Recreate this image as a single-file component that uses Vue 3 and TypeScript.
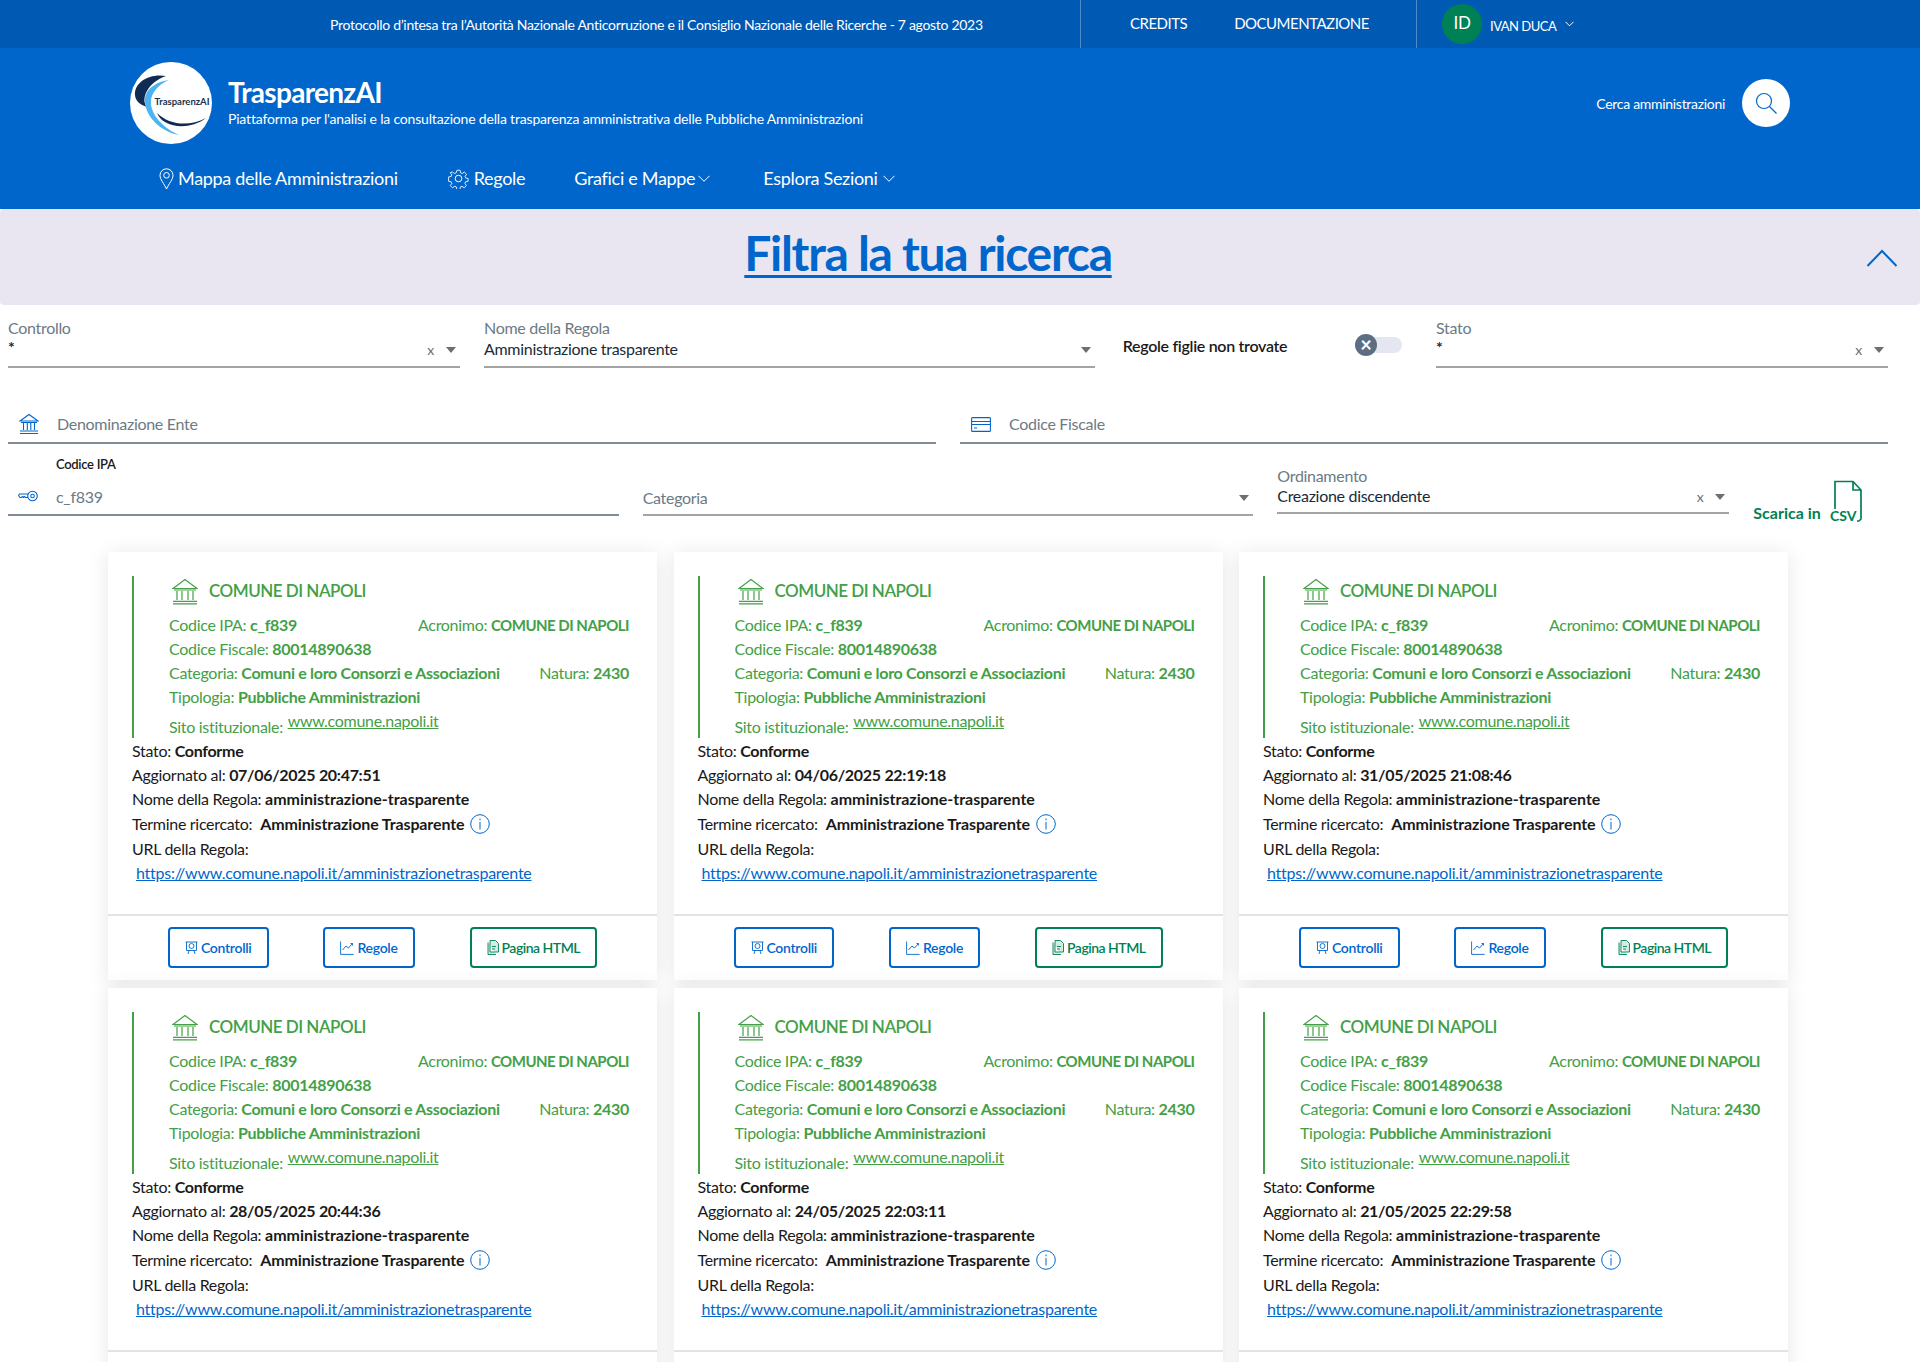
<script setup lang="ts">
const cards = [
  { updated: '07/06/2025 20:47:51' },
  { updated: '04/06/2025 22:19:18' },
  { updated: '31/05/2025 21:08:46' },
  { updated: '28/05/2025 20:44:36' },
  { updated: '24/05/2025 22:03:11' },
  { updated: '21/05/2025 22:29:58' },
];
</script>

<template>
  <div class="page">
    <div class="topbar">
      <span class="topbar-text">Protocollo d’intesa tra l’Autorità Nazionale Anticorruzione e il Consiglio Nazionale delle Ricerche - 7 agosto 2023</span>
      <div class="topbar-links">
        <a>CREDITS</a>
        <a>DOCUMENTAZIONE</a>
      </div>
      <div class="topbar-user">
        <span class="avatar">ID</span>
        <span class="user-name">IVAN DUCA</span>
        <svg class="user-chevron" width="9" height="6" viewBox="0 0 9 6"><path d="M.5.8l4 4 4-4" fill="none" stroke="#fff" /></svg>
      </div>
    </div>

    <header class="header">
      <div class="brand-row">
        <svg class="logo" width="82" height="82" viewBox="0 0 82 82">
          <circle cx="41" cy="41" r="41" fill="#fff" />
          <path d="M36 14C20 11 4 20 5 33c0 5 5 10 12 12C10 37 18 20 36 14z" fill="#0f2b52" />
          <path d="M39 18C25 20 14 28 15 40c1 16 17 30 34 33C33 66 20 52 21 39c0-8 8-17 18-21z" fill="#4db4f2" />
          <path d="M27 51c6 15 32 18 49 5-17 9-37 7-49-5z" fill="#0f2b52" />
          <text x="52" y="43" text-anchor="middle" class="logo-text">TrasparenzAI</text>
        </svg>
        <div class="brand-text">
          <div class="brand-title">TrasparenzAI</div>
          <div class="brand-sub">Piattaforma per l'analisi e la consultazione della trasparenza amministrativa delle Pubbliche Amministrazioni</div>
        </div>
        <div class="search">
          <span>Cerca amministrazioni</span>
          <span class="search-btn">
            <svg width="24" height="24" viewBox="0 0 24 24" fill="none" stroke="#0066cc" stroke-width="1.2"><circle cx="10" cy="10" r="7.5" /><path d="M15.5 15.5l7 7" /></svg>
          </span>
        </div>
      </div>
      <nav class="nav">
        <a class="nav-item nav-mappa">
          <svg width="15" height="22" viewBox="0 0 15 22" fill="none" stroke="#fff"><path d="M7.5 21C5 15.500 1 11.500 1 7.300A6.500 6.500 0 0 1 14 7.300C14 11.500 10 15.500 7.500 21z" /><circle cx="7.500" cy="7.300" r="2.800" /></svg>
          Mappa delle Amministrazioni
        </a>
        <a class="nav-item nav-regole">
          <svg width="21" height="21" viewBox="0 0 24 24" fill="none" stroke="#fff" stroke-width="1.100"><circle cx="12" cy="12" r="3.800" /><path d="M10 1.500h4l.6 3.300 2 .9 2.800-1.900 2.800 2.800-1.900 2.800.9 2v0l3 .6v3.500l-3.300.7-.8 2 1.900 2.800-2.800 2.800-2.800-1.900-2 .8-.6 3.300h-4l-.6-3.300-2-.8-2.800 1.900-2.800-2.800 1.900-2.800-.8-2-3.300-.7V10l3.300-.6.800-2L1.500 4.600 4.300 3.800l2.800 1.900 2-.9z" transform="translate(1.200 1.200) scale(.9)" /></svg>
          Regole
        </a>
        <a class="nav-item nav-grafici">
          Grafici e Mappe
          <svg width="12" height="7" viewBox="0 0 12 7"><path d="M.5.800l5.500 5.500L11.500.800" fill="none" stroke="#fff" /></svg>
        </a>
        <a class="nav-item nav-esplora">
          Esplora Sezioni
          <svg width="12" height="7" viewBox="0 0 12 7"><path d="M.5.800l5.500 5.500L11.500.800" fill="none" stroke="#fff" /></svg>
        </a>
      </nav>
    </header>

    <div class="filter-band">
      <h1 class="filter-title"><a>Filtra la tua ricerca</a></h1>
      <svg class="filter-chevron" width="32" height="18" viewBox="0 0 32 18"><path d="M1.500 17L16 2l14.500 15" fill="none" stroke="#0066cc" stroke-width="2" /></svg>
    </div>

    <section class="filters">
      <div class="select span-3 row-one">
        <label>Controllo</label>
        <div class="select-value star">*</div>
        <span class="clear">x</span><span class="arrow"></span>
      </div>
      <div class="select span-4 row-one">
        <label>Nome della Regola</label>
        <div class="select-value">Amministrazione trasparente</div>
        <span class="arrow"></span>
      </div>
      <div class="toggle-field span-2">
        <span>Regole figlie non trovate</span>
        <span class="toggle">
          <span class="toggle-knob">×</span>
        </span>
      </div>
      <div class="select span-3 row-one">
        <label>Stato</label>
        <div class="select-value star">*</div>
        <span class="clear">x</span><span class="arrow"></span>
      </div>

      <div class="input span-6 row-two">
        <svg width="20" height="22" viewBox="0 0 20 22" fill="none" stroke="#0066cc" stroke-width="1.100"><path d="M1 8l9-6.500L19 8zM2 9.500h16M4.500 10v7M8.300 10v7M11.800 10v7M15.500 10v7M1 18h18M1 20.500h18" /></svg>
        <span>Denominazione Ente</span>
      </div>
      <div class="input span-6 row-two">
        <svg width="20" height="15" viewBox="0 0 20 15" fill="none" stroke="#0066cc" stroke-width="1.100"><rect x=".6" y=".6" width="18.800" height="13.800" rx="1" /><path d="M.6 4.500h18.800M.6 7.500h18.800M3 11h3" /></svg>
        <span>Codice Fiscale</span>
      </div>

      <div class="input span-4 row-three">
        <label class="ipa-label">Codice IPA</label>
        <svg class="key-icon" width="20" height="12" viewBox="0 0 20 12" fill="none" stroke="#0066cc" stroke-width="1.100"><circle cx="14.500" cy="6" r="4.800" /><circle cx="14.500" cy="6" r="1.800" /><path d="M10 4H1.500L.6 5.500 2 7.500h1.500l1-1 1 1 1-1 1 1H10" /></svg>
        <span class="ipa-value">c_f839</span>
      </div>
      <div class="select span-4 row-three categoria">
        <div class="select-placeholder">Categoria</div>
        <span class="arrow"></span>
      </div>
      <div class="select span-3 row-three ordinamento">
        <label>Ordinamento</label>
        <div class="select-value">Creazione discendente</div>
        <span class="clear">x</span><span class="arrow"></span>
      </div>
      <a class="csv span-1">
        <span class="csv-label">Scarica in</span>
        <svg width="33" height="43" viewBox="0 0 33 43" fill="none" stroke="#008055" stroke-width="1.700">
          <path d="M5 29V1.500h18L31 10v29l-2 2h-2M23 1.500V10h8" />
          <text x="0" y="41" class="csv-text">CSV</text>
        </svg>
      </a>
    </section>

    <section class="cards">
      <article v-for="card in cards" :key="card.updated" class="card">
        <div class="card-body">
          <div class="entity">
            <div class="entity-name">
              <svg width="26" height="27" viewBox="0 0 26 27" fill="none" stroke="#43a047" stroke-width="1.200"><path d="M1 10.500L13 1.500l12 9zM2 12h22M5 13v9M10 13v9M16 13v9M21 13v9M1 23.300h24M1 25.800h24" /></svg>
              COMUNE DI NAPOLI
            </div>
            <div class="entity-row">
              <span>Codice IPA: <b>c_f839</b></span>
              <span>Acronimo: <b class="caps">COMUNE DI NAPOLI</b></span>
            </div>
            <div class="entity-row">
              <span>Codice Fiscale: <b>80014890638</b></span>
            </div>
            <div class="entity-row">
              <span>Categoria: <b>Comuni e loro Consorzi e Associazioni</b></span>
              <span>Natura: <b>2430</b></span>
            </div>
            <div class="entity-row">
              <span>Tipologia: <b>Pubbliche Amministrazioni</b></span>
            </div>
            <div class="entity-site">
              Sito istituzionale: <a>www.comune.napoli.it</a>
            </div>
          </div>
          <div class="detail">Stato: <b>Conforme</b></div>
          <div class="detail">Aggiornato al: <b>{{ card.updated }}</b></div>
          <div class="detail">Nome della Regola: <b class="rule-name">amministrazione-trasparente</b></div>
          <div class="detail term">
            Termine ricercato: <b>Amministrazione Trasparente</b>
            <svg width="20" height="20" viewBox="0 0 20 20" fill="none" stroke="#0066cc"><circle cx="10" cy="10" r="9.300" /><path d="M10 8v7.500M10 4.500v1.800" /></svg>
          </div>
          <div class="detail url-label">URL della Regola:</div>
          <a class="rule-url">https://www.comune.napoli.it/amministrazionetrasparente</a>
        </div>
        <div class="card-actions">
          <a class="btn">
            <svg width="13" height="14" viewBox="0 0 13 14" fill="none" stroke="#0066cc" stroke-width=".9"><path d="M.5 1h12M1.500 1v8.500h10V1M4 9.500L3 13M9 9.500l1 3.500" /><circle cx="6.500" cy="5" r="2.500" /></svg>
            Controlli
          </a>
          <a class="btn">
            <svg width="14" height="14" viewBox="0 0 14 14" fill="none" stroke="#0066cc" stroke-width=".9"><path d="M.6.500v12.900h13M2.500 9l3.500-4 2.500 2 4-4.500M10.500 2.500h2v2" /></svg>
            Regole
          </a>
          <a class="btn btn-green">
            <svg width="12" height="15" viewBox="0 0 12 15" fill="none" stroke="#008055" stroke-width=".9"><path d="M3 .5h5.500l3 3V12H3zM1 2.500v12h8" fill="#d5ebe2" /><path d="M5 6.500h4M5 9h3" /></svg>
            Pagina HTML
          </a>
        </div>
      </article>
    </section>
  </div>
</template>

<style scoped>
.page {
  height: 1362px;
  overflow: hidden;
  background: #fff;
  font-family: Lato, "Open Sans", sans-serif;
  letter-spacing: -0.3px;
  color: #1a1a1a;
}

.topbar {
  height: 48px;
  background: #0059b3;
  color: #fff;
  display: flex;
  align-items: stretch;
}
.topbar-text {
  width: 1080px;
  padding-left: 330px;
  box-sizing: border-box;
  font-size: 14px;
  line-height: 50px;
  white-space: nowrap;
}
.topbar-links {
  width: 337px;
  box-sizing: border-box;
  border-left: 1px solid #4d8bc9;
  border-right: 1px solid #4d8bc9;
  padding-left: 49px;
  display: flex;
  gap: 47px;
  font-size: 15px;
  letter-spacing: -0.5px;
  line-height: 46px;
}
.topbar-user {
  display: flex;
  align-items: center;
  padding-left: 25px;
}
.avatar {
  width: 40px;
  height: 40px;
  border-radius: 50%;
  background: #008055;
  text-align: center;
  line-height: 38px;
  font-size: 17px;
}
.user-name {
  margin-left: 8px;
  margin-top: 4px;
  font-size: 13px;
  letter-spacing: -0.5px;
}
.user-chevron {
  margin-left: 9px;
}

.header {
  height: 161px;
  background: #0066cc;
  color: #fff;
}
.brand-row {
  height: 100px;
  padding: 14px 0 0 130px;
  box-sizing: border-box;
  display: flex;
  align-items: flex-start;
}
.logo {
  flex: none;
}
.logo-text {
  font-size: 9.500px;
  font-weight: 700;
  letter-spacing: 0;
  fill: #17324d;
}
.brand-text {
  margin-left: 16px;
  padding-top: 13px;
}
.brand-title {
  font-size: 28px;
  line-height: 34px;
  font-weight: 700;
  letter-spacing: -0.7px;
}
.brand-sub {
  font-size: 14px;
  line-height: 19px;
  letter-spacing: -0.18px;
}
.search {
  margin-left: auto;
  margin-right: 130px;
  margin-top: 17px;
  display: flex;
  align-items: center;
  gap: 17px;
  font-size: 14px;
}
.search-btn {
  width: 48px;
  height: 48px;
  border-radius: 50%;
  background: #fff;
  display: flex;
  align-items: center;
  justify-content: center;
}
.nav {
  display: flex;
  padding-left: 159px;
  font-size: 18px;
  line-height: 61px;
}
.nav-item {
  display: flex;
  align-items: center;
  gap: 5px;
  white-space: nowrap;
}
.nav-mappa {
  gap: 4px;
}
.nav-regole {
  margin-left: 50px;
}
.nav-grafici {
  margin-left: 49px;
  gap: 3px;
}
.nav-esplora {
  margin-left: 53px;
}

.filter-band {
  height: 96px;
  padding-right: 64px;
  box-sizing: border-box;
  background: #e9e6f2;
  border-radius: 4px;
  position: relative;
  text-align: center;
}
.filter-title {
  margin: 0;
  font-size: 48px;
  line-height: 87px;
  font-weight: 700;
  letter-spacing: -1.3px;
  color: #0066cc;
}
.filter-title a {
  text-decoration: underline;
  text-decoration-thickness: 3px;
  text-underline-offset: 4px;
}
.filter-chevron {
  position: absolute;
  right: 22px;
  top: 40px;
}

.filters {
  display: grid;
  grid-template-columns: repeat(12, minmax(0, 1fr));
  align-content: start;
  column-gap: 24px;
  padding: 0 32px 0 8px;
  height: 247px;
  font-size: 16px;
}
.span-1 { grid-column: span 1; }
.span-2 { grid-column: span 2; }
.span-3 { grid-column: span 3; }
.span-4 { grid-column: span 4; }
.span-6 { grid-column: span 6; }

.select {
  position: relative;
  box-sizing: border-box;
  border-bottom: 2px solid #a3a3a3;
}
.select label {
  display: block;
  font-size: 16px;
  line-height: 20px;
  color: #6c7a85;
}
.select-value {
  line-height: 20px;
  color: #1a2a3a;
}
.select-placeholder {
  color: #6c7a85;
  line-height: 20px;
  padding-top: 44px;
}
.row-one {
  height: 50px;
  margin-top: 13px;
}
.row-one .select-value {
  margin-top: 1px;
}
.row-one .select-value.star {
  margin-top: -1px;
  font-weight: 700;
}
.arrow {
  position: absolute;
  right: 4px;
  bottom: 13px;
  border-left: 5px solid transparent;
  border-right: 5px solid transparent;
  border-top: 6px solid #6e6e6e;
}
.clear {
  position: absolute;
  right: 26px;
  bottom: 9px;
  font-size: 14px;
  line-height: 14px;
  color: #6e6e6e;
}
.toggle-field {
  display: flex;
  align-items: center;
  justify-content: space-between;
  height: 32px;
  margin-top: 24px;
  padding: 0 10px 0 4px;
  font-weight: 600;
  font-size: 16px;
}
.toggle {
  width: 47px;
  height: 16px;
  flex: none;
  display: block;
  border-radius: 8px;
  background: #e4e7f0;
  position: relative;
}
.toggle-knob {
  position: absolute;
  left: 0;
  top: -3px;
  width: 22px;
  height: 22px;
  border-radius: 50%;
  background: #5c6f82;
  color: #fff;
  text-align: center;
  line-height: 21px;
  font-size: 20px;
  font-weight: 700;
}

.input {
  position: relative;
  box-sizing: border-box;
  display: flex;
  align-items: center;
  border-bottom: 2px solid #7f8b96;
  color: #6c7a85;
}
.row-two {
  height: 64px;
  margin-top: 12px;
  padding: 26px 0 0 11px;
  gap: 18px;
}
.row-two span {
  line-height: 20px;
}
.row-three {
  height: 72px;
}
.row-three.input {
  padding-left: 11px;
  padding-top: 34px;
  gap: 18px;
  color: #6c7a85;
}
.ipa-label {
  position: absolute;
  left: 48px;
  top: 11px;
  font-size: 13px;
  line-height: 18px;
  font-weight: 600;
  color: #1a1a1a;
}
.key-icon {
  margin-left: -1px;
}
.ordinamento {
  height: 70px;
  padding-top: 22px;
}
.ordinamento .clear {
  bottom: 8px;
}
.ordinamento .arrow {
  bottom: 12px;
}
.csv {
  display: flex;
  align-items: flex-start;
  box-sizing: border-box;
  height: 72px;
  padding-top: 36px;
  color: #008055;
  font-weight: 700;
  font-size: 16px;
  letter-spacing: 0;
  white-space: nowrap;
}
.csv-label {
  line-height: 20px;
  margin-top: 23px;
  margin-right: 9px;
}
.csv svg {
  flex: none;
}
.csv-text {
  font-size: 14px;
  font-weight: 700;
  fill: #008055;
  stroke: none;
}

.cards {
  display: grid;
  grid-template-columns: repeat(3, 549px);
  justify-content: space-between;
  row-gap: 8px;
  margin: 0 132px 0 108px;
}
.card {
  height: 428px;
  background: #fff;
  box-shadow: 0 2px 20px rgba(0, 0, 0, 0.1);
  display: flex;
  flex-direction: column;
}
.card-body {
  height: 364px;
  box-sizing: border-box;
  padding: 24px 28px 0 24px;
  border-bottom: 2px solid #e3e3e3;
  font-size: 16px;
  line-height: 24px;
}
.card-body b {
  font-weight: 700;
}
.card-body b.caps {
  font-size: 15px;
  letter-spacing: -0.5px;
}
.card-body b.rule-name {
  letter-spacing: -0.03px;
}
.entity {
  height: 162px;
  margin-bottom: 1px;
  border-left: 2px solid #43a047;
  padding-left: 35px;
  box-sizing: border-box;
  color: #43a047;
}
.entity-name {
  height: 37px;
  box-sizing: border-box;
  padding: 0 0 7px 3px;
  display: flex;
  align-items: center;
  gap: 11px;
  font-size: 17px;
  font-weight: 600;
  letter-spacing: -0.5px;
  line-height: 30px;
}
.entity-row {
  display: flex;
  justify-content: space-between;
  white-space: nowrap;
}
.entity-site {
  padding-top: 6px;
  white-space: nowrap;
}
.entity-site a {
  position: relative;
  top: -6px;
  margin-left: 1px;
  text-decoration: underline;
}
.detail {
  white-space: nowrap;
}
.term {
  display: flex;
  align-items: center;
  height: 25px;
}
.term b {
  margin-left: 8px;
  margin-right: 6px;
  letter-spacing: -0.12px;
}
.url-label {
  line-height: 25px;
}
.rule-url {
  display: block;
  margin-left: 4px;
  color: #0066cc;
  letter-spacing: -0.25px;
  text-decoration: underline;
  white-space: nowrap;
}
.card-actions {
  flex: 1;
  display: flex;
  justify-content: space-between;
  padding: 11px 60px 0;
}
.btn {
  height: 41px;
  box-sizing: border-box;
  padding: 0 15px;
  display: flex;
  align-items: center;
  justify-content: center;
  gap: 3px;
  border: 2px solid #0066cc;
  border-radius: 4px;
  color: #0066cc;
  font-size: 14px;
  font-weight: 600;
  white-space: nowrap;
}
.btn-green {
  border-color: #008055;
  color: #008055;
  letter-spacing: -0.5px;
}
</style>

<style>
html, body {
  margin: 0;
  overflow: hidden;
}
</style>
